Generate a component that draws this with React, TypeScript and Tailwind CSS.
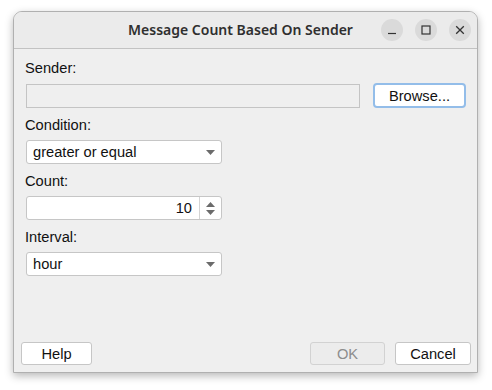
import React from "react";

const Caret = () => (
  <svg width="9" height="5" viewBox="0 0 9 5" className="block">
    <path d="M0 0 L9 0 L4.5 5 Z" fill="#6b6b6b" />
  </svg>
);

const Combo = ({ value }: { value: string }) => (
  <div className="ml-px w-[196px] h-[24px] bg-white border border-[#c6c6c6] rounded-[3px] flex items-center pl-[6px] pr-[6px]">
    <span className="flex-1 leading-[18px]">{value}</span>
    <Caret />
  </div>
);

const Label = ({ children, className = "" }: { children: React.ReactNode; className?: string }) => (
  <div className={"h-[18px] leading-[18px] " + className}>{children}</div>
);

export default function App() {
  return (
    <div className="w-[492px] h-[390px] bg-white pt-[11px] pl-[13px] font-['Liberation_Sans',Arial,sans-serif] text-[14.67px] text-[#111111]">
      <div className="w-[465px] h-[362px] flex flex-col border border-[#b0b0b0] rounded-t-[9px] bg-[#efefef] shadow-[0_3px_9px_rgba(0,0,0,0.28)]">
        {/* Title bar */}
        <div className="h-[37px] shrink-0 bg-[#ebebeb] border-b border-[#c2c2c2] rounded-t-[8px] grid grid-cols-[1fr_auto_1fr] items-center">
          <div />
          <div className="font-['Noto_Sans',sans-serif] font-semibold text-[14px] text-[#2f2f2f] mr-[10px] leading-[20px]">
            Message Count Based On Sender
          </div>
          <div className="flex justify-end gap-[12px] pr-[6px]">
            <div className="w-[22px] h-[22px] rounded-full bg-[#dadada] flex items-center justify-center">
              <svg width="10" height="10" viewBox="0 0 10 10">
                <path d="M1 8.5 H9" stroke="#333" strokeWidth="1.2" />
              </svg>
            </div>
            <div className="w-[22px] h-[22px] rounded-full bg-[#dadada] flex items-center justify-center">
              <svg width="10" height="10" viewBox="0 0 10 10">
                <rect x="1" y="1" width="8" height="8" fill="none" stroke="#333" strokeWidth="1.2" />
              </svg>
            </div>
            <div className="w-[22px] h-[22px] rounded-full bg-[#dadada] flex items-center justify-center">
              <svg width="10" height="10" viewBox="0 0 10 10">
                <path d="M1.2 1.2 L8.8 8.8 M8.8 1.2 L1.2 8.8" stroke="#333" strokeWidth="1.3" />
              </svg>
            </div>
          </div>
        </div>

        {/* Body */}
        <div className="flex-1 flex flex-col pt-[10px] pl-[11px] pr-[11px] pb-[7px]">
          <Label>Sender:</Label>
          <div className="mt-[6px] flex items-end gap-[13px]">
            <div className="ml-px flex-1 h-[24px] bg-[#efefef] border border-[#c4c4c4]" />
            <button className="w-[93px] h-[25px] bg-white border-2 border-[#93bde9] rounded-[4px] flex items-center justify-center leading-[18px]">
              Browse...
            </button>
          </div>

          <Label className="mt-[8px]">Condition:</Label>
          <div className="mt-[6px]">
            <Combo value="greater or equal" />
          </div>

          <Label className="mt-[8px]">Count:</Label>
          <div className="mt-[6px] ml-px w-[196px] h-[24px] bg-white border border-[#c6c6c6] rounded-[3px] flex">
            <div className="flex-1 flex items-center justify-end pr-[7px] leading-[18px]">10</div>
            <div className="w-[22px] border-l border-[#d4d4d4] flex flex-col items-center justify-center gap-[3px]">
              <svg width="9" height="5" viewBox="0 0 9 5" className="block">
                <path d="M0 5 L9 5 L4.5 0 Z" fill="#6b6b6b" />
              </svg>
              <Caret />
            </div>
          </div>

          <Label className="mt-[8px]">Interval:</Label>
          <div className="mt-[6px]">
            <Combo value="hour" />
          </div>

          <div className="flex-1" />

          <div className="flex items-center -ml-[4px] -mr-[5px]">
            <button className="w-[71px] h-[23px] bg-white border border-[#c6c6c6] rounded-[3px] leading-[18px]">
              Help
            </button>
            <div className="flex-1" />
            <button className="w-[75px] h-[23px] bg-[#ececec] border border-[#d2d2d2] rounded-[3px] text-[#8d8d8d] leading-[18px]">
              OK
            </button>
            <button className="ml-[10px] w-[76px] h-[23px] bg-white border border-[#c6c6c6] rounded-[3px] leading-[18px]">
              Cancel
            </button>
          </div>
        </div>
      </div>
    </div>
  );
}
